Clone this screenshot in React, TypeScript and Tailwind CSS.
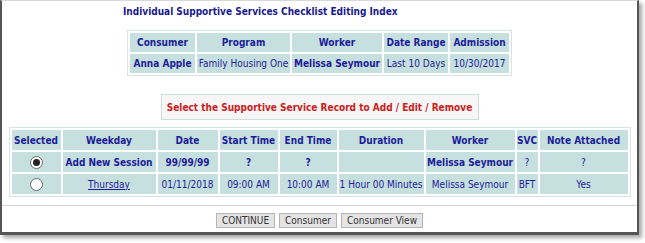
import React from 'react'

const infoHead = ['Consumer', 'Program', 'Worker', 'Date Range', 'Admission']
const infoWidths = ['w-[65px]', 'w-[93px]', 'w-[90px]', 'w-[64px]', 'w-[59px]']

const cols = [
  { label: 'Selected', w: 'w-[49px]' },
  { label: 'Weekday', w: 'w-[93px]' },
  { label: 'Date', w: 'w-[60px]' },
  { label: 'Start Time', w: 'w-[58px]' },
  { label: 'End Time', w: 'w-[57px]' },
  { label: 'Duration', w: 'w-[85px]' },
  { label: 'Worker', w: 'w-[89px]' },
  { label: 'SVC', w: 'w-[21px]' },
  { label: 'Note Attached', w: 'w-[88px]' },
]

function Radio({ checked }: { checked?: boolean }) {
  return (
    <span className="mx-auto flex h-[13px] w-[13px] items-center justify-center rounded-full border border-[#6b6b6b] bg-white">
      {checked && <span className="h-[7px] w-[7px] rounded-full bg-[#222]" />}
    </span>
  )
}

export default function App() {
  const cell = 'bg-[#c6dfdf] p-0 text-center whitespace-nowrap'
  return (
    <div className="h-[243px] w-[645px] bg-white font-['DejaVu_Sans',sans-serif] font-stretch-condensed text-[10px] text-[#1d1d9a]">
      <div className="flex h-[235px] w-[639px] flex-col items-center border-t border-t-[#d8d8d8] border-l-2 border-l-[#555] border-r-2 border-r-[#555] border-b-[3px] border-b-[#555] shadow-[3px_3px_4px_rgba(0,0,0,0.35)]">
        <h1 className="mt-[4px] ml-[121px] self-start text-[10px] leading-[14px] font-bold text-[#1a1a8e]">Individual Supportive Services Checklist Editing Index</h1>

        <table className="mt-[11px] table-fixed border-separate border-spacing-[2px] border border-[#d6e3e3]">
          <tbody>
            <tr>
              {infoHead.map((h, i) => (
                <th key={h} className={`${cell} ${infoWidths[i]} h-[19px] font-bold`}>{h}</th>
              ))}
            </tr>
            <tr>
              <td className={`${cell} h-[19px] font-bold`}>Anna Apple</td>
              <td className={cell}>Family Housing One</td>
              <td className={`${cell} font-bold`}>Melissa Seymour</td>
              <td className={cell}>Last 10 Days</td>
              <td className={cell}>10/30/2017</td>
            </tr>
          </tbody>
        </table>

        <div className="mt-[18px] flex h-[26px] w-[318px] items-center justify-center border border-[#cfdcdc] bg-[#f6f6f6] text-[10px] font-bold text-[#cc2020]">
          Select the Supportive Service Record to Add / Edit / Remove
        </div>

        <table className="mt-[7px] table-fixed border-separate border-spacing-[2px] border border-[#d6e3e3]">
          <tbody>
            <tr>
              {cols.map((c) => (
                <th key={c.label} className={`${cell} ${c.w} h-[20px] font-bold`}>{c.label}</th>
              ))}
            </tr>
            <tr className="font-bold">
              <td className={`${cell} h-[20px]`}><Radio checked /></td>
              <td className={cell}>Add New Session</td>
              <td className={cell}>99/99/99</td>
              <td className={cell}>?</td>
              <td className={cell}>?</td>
              <td className={cell}></td>
              <td className={cell}>Melissa Seymour</td>
              <td className={`${cell} font-normal`}>?</td>
              <td className={`${cell} font-normal`}>?</td>
            </tr>
            <tr>
              <td className={`${cell} h-[20px]`}><Radio /></td>
              <td className={cell}><span className="underline">Thursday</span></td>
              <td className={cell}>01/11/2018</td>
              <td className={cell}>09:00 AM</td>
              <td className={cell}>10:00 AM</td>
              <td className={cell}>1 Hour 00 Minutes</td>
              <td className={cell}>Melissa Seymour</td>
              <td className={cell}>BFT</td>
              <td className={cell}>Yes</td>
            </tr>
          </tbody>
        </table>

        <div className="mt-[8px] h-px w-full bg-[#d4d4d4]" />

        <div className="mt-[7px] flex gap-[4px] text-[10px] text-[#333]">
          <button className="h-[15px] w-[59px] border border-[#b5b5b5] bg-[#e4e4e4] leading-none">CONTINUE</button>
          <button className="h-[15px] w-[58px] border border-[#b5b5b5] bg-[#e4e4e4] leading-none">Consumer</button>
          <button className="h-[15px] w-[82px] border border-[#b5b5b5] bg-[#e4e4e4] leading-none">Consumer View</button>
        </div>
      </div>
    </div>
  )
}
